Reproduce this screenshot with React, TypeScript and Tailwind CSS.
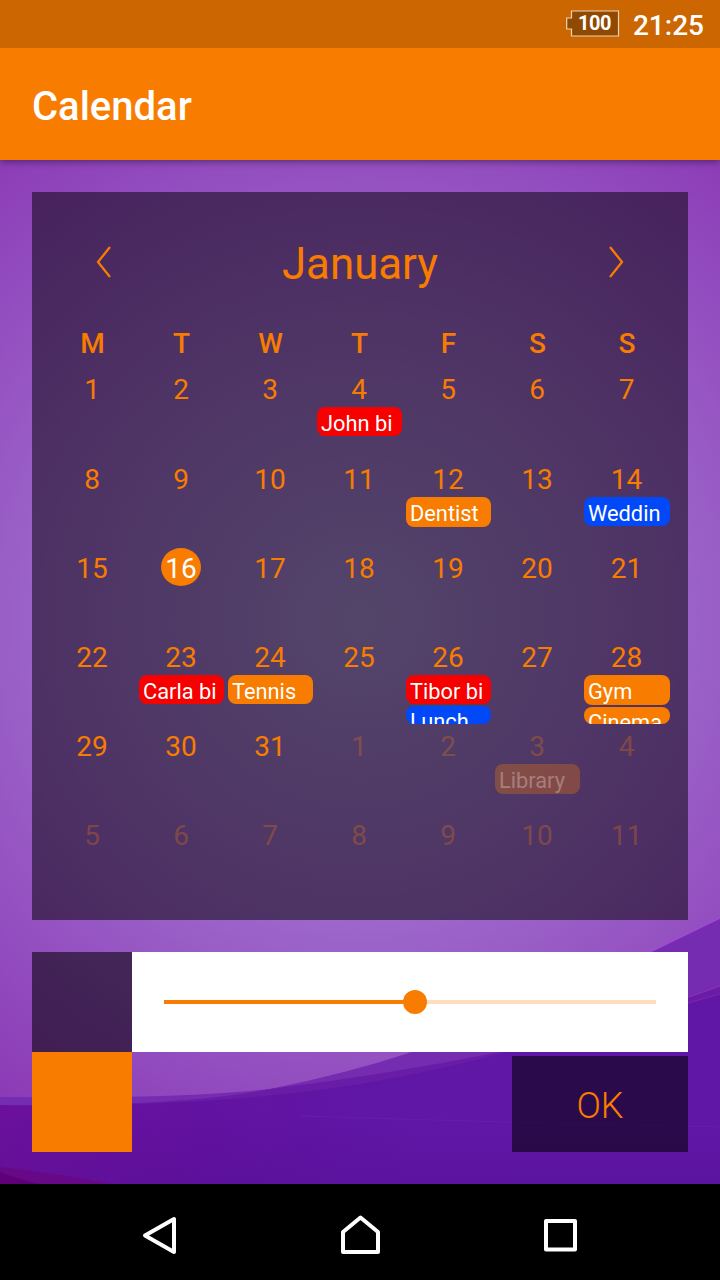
type Tone = "red" | "orange" | "blue";
type Event = { label: string; tone: Tone; tall?: boolean };

const tones: Record<Tone, string> = {
  red: "bg-[#f60000]",
  orange: "bg-[#f77c00]",
  blue: "bg-[#0048f8]",
};

const events: Record<number, Event[]> = {
  3: [{ label: "John bi", tone: "red" }],
  11: [{ label: "Dentist", tone: "orange", tall: true }],
  13: [{ label: "Weddin", tone: "blue" }],
  22: [{ label: "Carla bi", tone: "red" }],
  23: [{ label: "Tennis", tone: "orange" }],
  25: [
    { label: "Tibor bi", tone: "red" },
    { label: "Lunch", tone: "blue" },
  ],
  27: [
    { label: "Gym", tone: "orange", tall: true },
    { label: "Cinema", tone: "orange", tall: true },
  ],
  33: [{ label: "Library", tone: "orange", tall: true }],
};

const weekdays = ["M", "T", "W", "T", "F", "S", "S"];
const TODAY = 15;

function Wallpaper() {
  return (
    <svg className="absolute inset-0 h-full w-full" viewBox="0 0 720 1280" aria-hidden="true">
      <defs>
        <radialGradient id="sky" gradientUnits="userSpaceOnUse" cx="360" cy="620" r="600">
          <stop offset="0" stopColor="#a88ad4" />
          <stop offset="0.25" stopColor="#a179cf" />
          <stop offset="0.52" stopColor="#9c65ca" />
          <stop offset="0.75" stopColor="#9450c0" />
          <stop offset="1" stopColor="#8b3ab6" />
        </radialGradient>
        <linearGradient id="sea" gradientUnits="userSpaceOnUse" x1="0" y1="1150" x2="400" y2="1080">
          <stop offset="0" stopColor="#6b109c" />
          <stop offset="0.5" stopColor="#6212a0" />
          <stop offset="1" stopColor="#6017a6" />
        </linearGradient>
        <linearGradient id="depth" gradientUnits="userSpaceOnUse" x1="0" y1="1112" x2="0" y2="1184">
          <stop offset="0" stopColor="#500e90" stopOpacity="0" />
          <stop offset="1" stopColor="#500e90" stopOpacity="0.3" />
        </linearGradient>
      </defs>
      <rect width="720" height="1280" fill="url(#sky)" />
      <path d="M0 1105Q180 1107 270 1089Q345 1074 412 1052Q530 1014 650 952L720 918V1184H0Z" fill="#762cb0" />
      <path d="M640 957L720 918" stroke="#a848dc" strokeWidth="1.2" />
      <path d="M0 1097Q180 1099 270 1089Q385 1075 500 1052Q600 1028 720 986V1184H0Z" fill="#762cb0" />
      <path d="M0 1105Q180 1107 270 1089Q385 1075 500 1052Q600 1028 720 986V1184H0Z" fill="#691ca6" />
      <path d="M660 1007L720 986" stroke="#8a30b8" strokeWidth="1.2" />
      <path d="M0 1105Q200 1109 360 1084Q430 1072 500 1054Q600 1027 720 994V1184H0Z" fill="url(#sea)" />
      <path d="M660 1011L720 994" stroke="#8224b0" strokeWidth="1.2" />
      <path d="M0 1111H110Q420 1120 720 1127V1184H0Z" fill="url(#depth)" />
      <path d="M300 1116Q520 1123 720 1127" stroke="#742bb4" strokeOpacity="0.35" fill="none" />
      <path d="M0 1167Q60 1174 110 1184H0Z" fill="#670887" />
      <path d="M0 1172Q20 1180 40 1184H0Z" fill="#5f0078" />
    </svg>
  );
}

function StatusBar() {
  return (
    <div className="relative z-10 flex h-12 items-center justify-end bg-[#cb6600] pr-4 text-white">
      <div className="relative h-7 w-[54px]">
        <svg className="absolute inset-0" width="54" height="28" viewBox="0 0 54 28">
          <path d="M5.500 1H52.500V26H5.500V19H.7V8H5.500Z" fill="#8f4900" stroke="#efd3b4" strokeWidth="1.2" />
        </svg>
        <span className="absolute left-[12px] top-[2px] text-[20px] font-bold leading-[23px] tracking-[-0.5px]">100</span>
      </div>
      <span className="ml-[13px] mt-[3px] text-[28px] font-medium leading-8">21:25</span>
    </div>
  );
}

function DayCell({ index }: { index: number }) {
  const outside = index > 30;
  const day = outside ? index - 30 : index + 1;
  const today = index === TODAY;
  return (
    <div className="flex h-[89.1px] flex-col px-[2px]">
      <div className={`mb-[0.25px] flex h-[39.4px] shrink-0 items-center justify-center pr-px pt-[2px] text-[28px] leading-8 ${outside ? "text-[#f77c00]/30" : ""}`}>
        {today ? (
          <span className="flex h-[38px] w-10 items-center justify-center rounded-[50%] bg-[#f77c00] pt-1 text-white">{day}</span>
        ) : (
          <span className="pt-1">{day}</span>
        )}
      </div>
      <div className="flex min-h-0 flex-1 flex-col gap-[2px]">
        {(events[index] ?? []).map((e, i) => (
          <div
            key={e.label}
            className={`${outside ? "bg-[#f77c00]/30 text-white/30" : `${tones[e.tone]} text-white`} ${e.tall ? "h-[30px]" : "h-[29px]"} ${i === 0 ? "shrink-0 pt-[3px]" : "min-h-0 shrink pt-[2px]"} overflow-hidden rounded-lg pl-1 text-[21.8px] leading-7 whitespace-nowrap`}
          >
            {e.label}
          </div>
        ))}
      </div>
    </div>
  );
}

function Calendar() {
  return (
    <section className="h-[728px] bg-black/50 px-4 text-[#f77c00]">
      <header className="flex h-[136px] items-center justify-between px-12 pt-1">
        <svg width="16" height="32" viewBox="0 0 16 32" fill="none" stroke="currentColor" strokeWidth="2.3">
          <path d="M14 1L2 16L14 31" />
        </svg>
        <h2 className="pt-[3px] text-[43.8px] leading-[52px]">January</h2>
        <svg width="16" height="32" viewBox="0 0 16 32" fill="none" stroke="currentColor" strokeWidth="2.3">
          <path d="M2 1L14 16L2 31" />
        </svg>
      </header>
      <div className="grid h-[39.8px] grid-cols-[repeat(6,89px)_90px] text-center text-[28px] font-medium leading-8">
        {weekdays.map((d, i) => (
          <span key={i}>{d}</span>
        ))}
      </div>
      <div className="grid h-[534.6px] grid-cols-[repeat(6,89px)_90px] grid-rows-6">
        {Array.from({ length: 42 }, (_, i) => (
          <DayCell key={i} index={i} />
        ))}
      </div>
    </section>
  );
}

function Controls() {
  return (
    <section className="mt-8 flex flex-col">
      <div className="flex h-[100px]">
        <div className="w-[100px] bg-black/55" />
        <div className="flex flex-1 items-center bg-white px-8">
          <div className="h-1 w-[239px] bg-[#f77c00]" />
          <div className="size-6 rounded-full bg-[#f77c00]" />
          <div className="h-1 flex-1 bg-[#fedcbd]" />
        </div>
      </div>
      <div className="flex h-[100px] items-end justify-between">
        <div className="size-[100px] bg-[#f77c00]" />
        <button className="h-24 w-44 bg-black/55 pt-[3px] text-[36px] font-light text-[#f77c00]">OK</button>
      </div>
    </section>
  );
}

function NavigationBar() {
  return (
    <nav className="h-24 bg-black">
      <svg width="720" height="96" viewBox="0 0 720 96" fill="none" stroke="white" strokeWidth="4" strokeLinejoin="round">
        <path d="M145 51.500L174 35V68Z" />
        <path d="M343 68V48L360.500 33.500L378 48V68Z" />
        <path d="M546 37H575V65.500H546Z" />
      </svg>
    </nav>
  );
}

export default function App() {
  return (
    <div className="relative h-[1280px] w-[720px] overflow-hidden font-['Roboto',sans-serif]">
      <Wallpaper />
      <div className="relative flex h-full flex-col">
        <StatusBar />
        <div className="flex h-28 items-center bg-[#f77c00] px-8 pt-1.5 text-[40px] font-medium text-white shadow-[0_2px_7px_rgba(0,0,0,0.38)]">
          <h1>Calendar</h1>
        </div>
        <main className="flex-1 p-8">
          <Calendar />
          <Controls />
        </main>
        <NavigationBar />
      </div>
    </div>
  );
}
